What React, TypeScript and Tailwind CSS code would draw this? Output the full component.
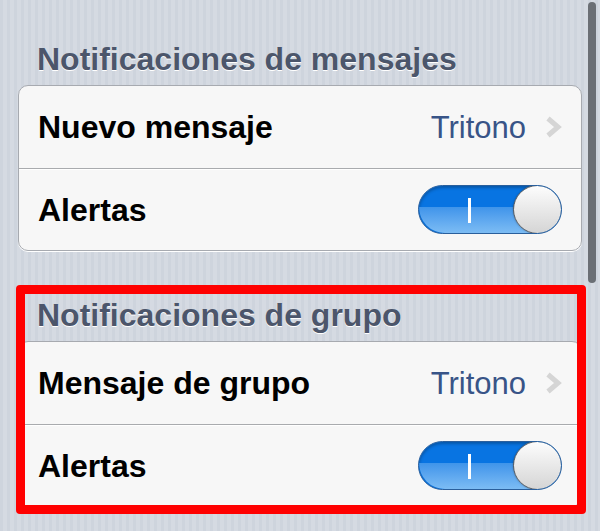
import React from "react";

type Row =
  | { kind: "link"; label: string; value: string }
  | { kind: "toggle"; label: string; on: boolean };

interface Section {
  title: string;
  rows: Row[];
  highlight?: boolean;
}

const sections: Section[] = [
  {
    title: "Notificaciones de mensajes",
    rows: [
      { kind: "link", label: "Nuevo mensaje", value: "Tritono" },
      { kind: "toggle", label: "Alertas", on: true },
    ],
  },
  {
    title: "Notificaciones de grupo",
    rows: [
      { kind: "link", label: "Mensaje de grupo", value: "Tritono" },
      { kind: "toggle", label: "Alertas", on: true },
    ],
    highlight: true,
  },
];

function Chevron() {
  return (
    <svg width="17" height="22" viewBox="0 0 17 22" className="ml-[19px] shrink-0">
      <polyline points="3,2.5 13,11 3,19.5" fill="none" stroke="#d5d5d5" strokeWidth="5" />
    </svg>
  );
}

function Toggle({ on }: { on: boolean }) {
  return (
    <div className="relative h-[49px] w-[144px] overflow-hidden rounded-full border border-[#2a5f9c] bg-[#0874e2] shadow-[inset_0_2px_3px_rgba(0,0,0,0.25)]">
      {/* lower gloss band */}
      <div className="absolute inset-x-0 bottom-0 h-[26px] rounded-b-full bg-gradient-to-b from-[#3f94ea] to-[#7cbcf4]" />
      <div className="absolute left-[49px] top-[12px] h-[25px] w-[3px] bg-white" />
      {on && (
        <div className="absolute right-[-1px] top-[-1px] h-[49px] w-[49px] rounded-full border border-[#555a60] bg-gradient-to-b from-[#fdfdfd] to-[#d5d5d5] shadow-[0_0_2px_rgba(0,0,0,0.3)]" />
      )}
    </div>
  );
}

function SettingsRow({ row, first }: { row: Row; first: boolean }) {
  return (
    <div
      className={
        "flex h-[82px] items-center justify-between pl-[19px] pr-[19px] " +
        (first ? "" : "border-t border-[#a9abae] shadow-[inset_0_1px_0_#ffffff]")
      }
    >
      <span className="text-[32px] font-bold leading-none text-black">{row.label}</span>
      {row.kind === "link" ? (
        <div className="flex items-center">
          <span className="text-[31px] leading-none text-[#385487]">{row.value}</span>
          <Chevron />
        </div>
      ) : (
        <Toggle on={row.on} />
      )}
    </div>
  );
}

function SettingsGroup({ section }: { section: Section }) {
  return (
    <div className="relative">
      <h2 className="pl-[19px] text-[32px] font-bold leading-[38px] text-[#4c566b] [text-shadow:0_1px_0_#ffffff]">
        {section.title}
      </h2>
      <div className="mt-[7px] overflow-hidden rounded-[10px] border border-[#a7aab0] bg-[#f7f7f7] shadow-[0_1px_0_#ffffff]">
        {section.rows.map((row, i) => (
          <SettingsRow key={i} row={row} first={i === 0} />
        ))}
      </div>
      {section.highlight && (
        <div className="pointer-events-none absolute left-[-2px] right-[-4px] top-[-11px] h-[229px] rounded-[4px] border-[9px] border-[#ff0000]" />
      )}
    </div>
  );
}

export default function App() {
  return (
    <div
      className="relative h-[531px] w-[600px] overflow-hidden bg-[#d2d7e0] bg-[repeating-linear-gradient(90deg,#ced4dd_0px,#ced4dd_3px,#d5dae2_3px,#d5dae2_7px)] px-[18px] pt-[40px]"
      style={{ fontFamily: '"Liberation Sans", Arial, sans-serif' }}
    >
      <div className="flex flex-col gap-[45px]">
        {sections.map((s) => (
          <SettingsGroup key={s.title} section={s} />
        ))}
      </div>
      {/* scroll indicator */}
      <div className="absolute right-[4px] top-[2px] h-[281px] w-[8px] rounded-full bg-[#6b6f75]" />
    </div>
  );
}
